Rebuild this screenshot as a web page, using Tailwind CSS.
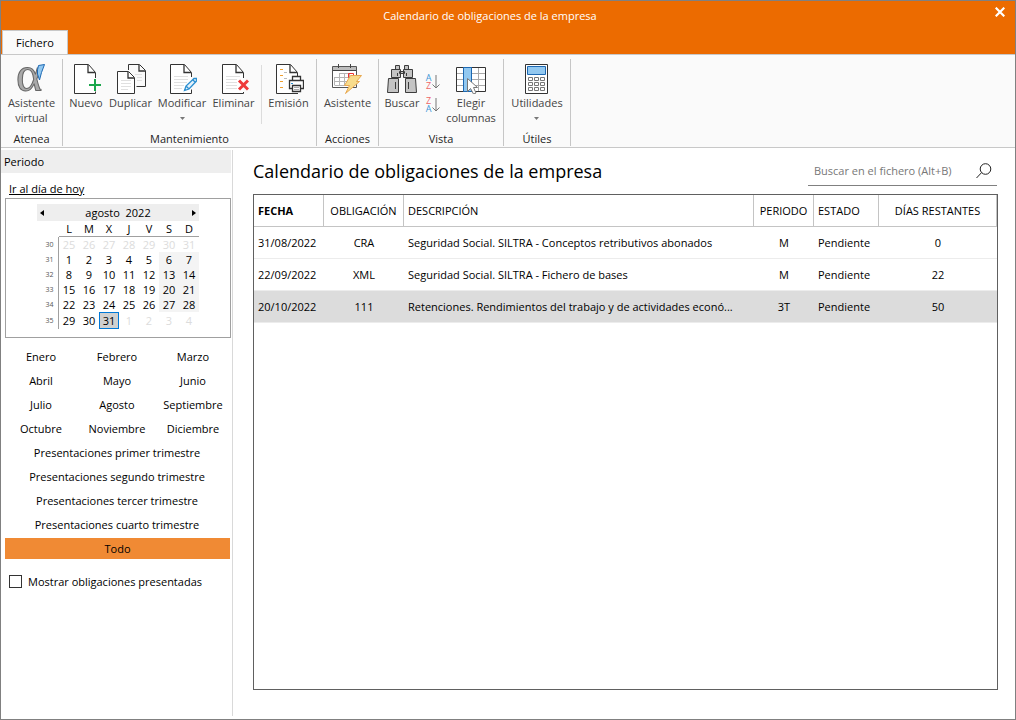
<!DOCTYPE html>
<html lang="es">
<head>
<meta charset="utf-8">
<meta name="viewport" content="width=device-width, initial-scale=1">
<title>Calendario de obligaciones de la empresa</title>
<script src="https://cdn.jsdelivr.net/npm/@tailwindcss/browser@4"></script>
</head>
<body class="flex min-h-screen flex-col border border-[#808080] bg-white font-['Open_Sans','Noto_Sans',sans-serif] text-[11px] leading-[15px] text-black">

<header class="flex flex-col bg-[#ec6b00]">
  <div class="flex h-[29px] items-center text-center text-white">
    <span class="flex-1 pl-4">Calendario de obligaciones de la empresa</span>
    <button aria-label="Cerrar" class="mr-2.5 ml-8 flex h-[22px] items-center justify-center self-start">
      <svg width="10" height="10" viewBox="0 0 10 10" stroke="#fff" stroke-width="2.2"><path d="M.7.7 9.3 9.3M9.3.7.7 9.3"/></svg>
    </button>
  </div>
  <nav class="flex h-6 px-px">
    <button class="w-[66px] border-x border-t border-[#c8c8c8] bg-[#fafafa]">Fichero</button>
  </nav>
</header>

<section aria-label="Cinta de opciones" class="flex h-[94px] border-y border-[#c8c8c8] bg-[#fafafa] pt-1 pb-px text-[#444]">
  <div class="flex w-[62px] flex-col border-r border-[#c6c6c6]">
    <div class="flex flex-1 justify-center pt-[5px]">
      <button class="flex flex-col items-center">
        <svg class="mb-px overflow-visible" width="30" height="30" viewBox="0 0 30 30">
          <text x="0" y="27" font-family="Liberation Serif, serif" font-size="50" fill="#a9a9a9" stroke="#666" stroke-width="1">α</text>
          <path d="M22.500 1.500 28.500 .5 25.500 8.500 23.500 16 21.500 10Q21 6 22.500 1.500Z" fill="#92c8f0" stroke="#1c68b3"/>
        </svg>
        <span>Asistente<br>virtual</span>
      </button>
    </div>
    <h2 class="text-center text-[#222]">Atenea</h2>
  </div>

  <div class="flex w-[254px] flex-col border-r border-[#c6c6c6]">
    <div class="flex flex-1 px-[3px] pt-[5px]">
      <button class="flex w-10 flex-col items-center">
        <svg class="mb-px shrink-0" width="30" height="30" viewBox="0 0 30 30" fill="none">
          <path d="M24.500 29.500H3.500V.5H17.500L24.500 8.500V14M24.500 27.500V29.500" fill="#fff" stroke="#333"/>
          <path d="M17 1V8.500H24" stroke="#333" stroke-width="1.300"/>
          <path d="M24 15V27M18 21H30" stroke="#1aa64b" stroke-width="2"/>
        </svg>
        <span>Nuevo</span>
      </button>
      <button class="flex w-[49px] flex-col items-center">
        <svg class="mb-px shrink-0" width="30" height="30" viewBox="0 0 30 30" fill="none">
          <path d="M12.500 6V.5H23.500L29.500 6.500V22.500H20.500" stroke="#333"/>
          <path d="M23 1V7H29" stroke="#333" stroke-width="1.300"/>
          <path d="M19 10.500H26M21 13.500H26M21 16.500H26" stroke="#e0e0e0"/>
          <path d="M1.500 7.500H12.500L18.500 13.500V29.500H1.500Z" fill="#fff" stroke="#333"/>
          <path d="M12 8V14H18" stroke="#333" stroke-width="1.300"/>
          <path d="M5 16.500H15M5 19.500H15M5 22.500H15M5 25.500H12" stroke="#e0e0e0"/>
        </svg>
        <span>Duplicar</span>
      </button>
      <button class="flex w-[54px] flex-col items-center">
        <svg class="mb-px shrink-0" width="30" height="30" viewBox="0 0 30 30" fill="none">
          <path d="M24.500 29.500H3.500V.5H17.500L24.500 8.500V13M24.500 25.500V29.500" fill="#fff" stroke="#333"/>
          <path d="M17 1V8.500H24" stroke="#333" stroke-width="1.300"/>
          <path d="M7 12.500H21M7 15.500H21M7 18.500H20M7 21.500H17M7 24.500H15" stroke="#e0e0e0"/>
          <path d="M17.500 26.500 19 22 27 14.500 29.500 14.500 29.500 17 22 25ZM19.500 22.500 21.500 24.500M26 16 28 18" fill="#e3f1fb" stroke="#2b8fd0" stroke-width="1.300"/>
        </svg>
        <span>Modificar</span>
        <svg class="mt-1" width="5" height="8" viewBox="0 0 5 8"><path d="M0 3H5L2.500 6Z" fill="#777"/></svg>
      </button>
      <button class="flex w-[49px] flex-col items-center">
        <svg class="mb-px shrink-0" width="30" height="30" viewBox="0 0 30 30" fill="none">
          <path d="M24.500 29.500H3.500V.5H17.500L24.500 8.500V14M24.500 28V29.500" fill="#fff" stroke="#333"/>
          <path d="M17 1V8.500H24" stroke="#333" stroke-width="1.300"/>
          <path d="M7 12.500H21M7 15.500H18M7 18.500H18M7 21.500H18M7 24.500H18" stroke="#e0e0e0"/>
          <path d="M20 16.500 29 25.500M29 16.500 20 25.500" stroke="#ee3a3a" stroke-width="3"/>
        </svg>
        <span>Eliminar</span>
      </button>
      <div class="mx-[3px] mt-px h-[59px] w-px bg-[#dcdcdc]"></div>
      <button class="flex w-[47px] flex-col items-center">
        <svg class="mb-px shrink-0" width="30" height="30" viewBox="0 0 30 30" fill="none">
          <path d="M24 29.500H2.500V.5H16.500L23.500 8.500V12" fill="#fff" stroke="#333"/>
          <path d="M16 1V8.500H23" stroke="#333" stroke-width="1.300"/>
          <path d="M6 5.500H9M6 11.500H9M6 17.500H9M6 23.500H9" stroke="#f0a030"/>
          <path d="M10 8.500H13M10 14.500H13" stroke="#bbb"/>
          <path d="M18.500 16V12.500H26.500V16" fill="#fff" stroke="#333" stroke-width="1.300"/>
          <path d="M15.500 16.500H29.500V24.500H15.500Z" fill="#fff" stroke="#333" stroke-width="1.300"/>
          <path d="M17 19.500H19" stroke="#2b8fd0"/>
          <path d="M18.500 21.500H26.500V27.500H18.500Z" fill="#fff" stroke="#333" stroke-width="1.300"/>
          <path d="M20 23.500H25M20 25.500H25" stroke="#aaa"/>
        </svg>
        <span>Emisión</span>
      </button>
    </div>
    <h2 class="text-center text-[#222]">Mantenimiento</h2>
  </div>

  <div class="flex w-[62px] flex-col border-r border-[#c6c6c6]">
    <div class="flex flex-1 justify-center pt-[5px]">
      <button class="flex flex-col items-center">
        <svg class="mb-px" width="30" height="30" viewBox="0 0 30 30" fill="none">
          <path d="M.5 2.500H24.500V23.500H.5Z" fill="#fff" stroke="#555"/>
          <path d="M1 3H24V6.500H1Z" fill="#bdbdbd"/>
          <path d="M1 6.500H24M6.500 0V4M18.500 0V4" stroke="#444"/>
          <path d="M2.500 13.500H21M2.500 17.500H21M7.500 9.500H21M2.500 21.500H17M2.500 13V21M7.500 9V21M12.500 9V21M17.500 9V21" stroke="#b5b5b5"/>
          <path d="M16.500 9.500H21.500V13.500H16.500Z" stroke="#e33"/>
          <path d="M18.500 11.500H29.500L24.500 17.500H27.500L13.500 29.500 17.500 21.500H12.500Z" fill="#f8dc8c" stroke="#e8a850"/>
        </svg>
        <span>Asistente</span>
      </button>
    </div>
    <h2 class="text-center text-[#222]">Acciones</h2>
  </div>

  <div class="flex w-[125px] flex-col border-r border-[#c6c6c6]">
    <div class="flex flex-1 px-[3px] pt-[5px]">
      <button class="flex w-10 flex-col items-center">
        <svg class="mb-px shrink-0" width="30" height="30" viewBox="0 0 30 30" fill="#c4c4c4" stroke="#3c3c3c">
          <path d="M8.500 1.500H12.500V5.500H8.500ZM17.500 1.500H21.500V5.500H17.500ZM12.500 7.500H17.500V9.500H12.500ZM4.500 5.500H13.500V13.500H4.500ZM16.500 5.500H25.500V13.500H16.500ZM1.500 14.500H11.500V28.500H.5ZM18.500 14.500H28.500L29.500 28.500H18.500Z"/>
          <path d="M10.500 9V12M19.500 9V12M8.500 18V25M21.500 18V25" fill="none"/>
        </svg>
        <span>Buscar</span>
      </button>
      <div class="flex w-[22px] flex-col items-center gap-[7px] pt-2.5">
        <button aria-label="Orden ascendente" class="flex items-center gap-px text-[9px] leading-2">
          <span class="flex flex-col"><span class="text-[#3b97d8]">A</span><span class="text-[#ee6666]">Z</span></span>
          <svg width="8" height="16" viewBox="0 0 8 16" fill="none" stroke="#777"><path d="M4 1V14M.5 10.500 4 14 7.500 10.500"/></svg>
        </button>
        <button aria-label="Orden descendente" class="flex items-center gap-px text-[9px] leading-2">
          <span class="flex flex-col"><span class="text-[#ee6666]">Z</span><span class="text-[#3b97d8]">A</span></span>
          <svg width="8" height="16" viewBox="0 0 8 16" fill="none" stroke="#777"><path d="M4 1V14M.5 10.500 4 14 7.500 10.500"/></svg>
        </button>
      </div>
      <button class="flex w-[54px] flex-col items-center">
        <svg class="mb-px shrink-0" width="30" height="30" viewBox="0 0 30 30" fill="none">
          <path d="M.5 3.500H29.500V27.500H.5Z" fill="#fff"/>
          <path d="M1 9.500H29M1 15.500H29M1 21.500H29M22.500 4V27" stroke="#aaa"/>
          <path d="M.5 3.500H29.500V27.500H.5Z" stroke="#333"/>
          <path d="M7.500 3.500H15.500V27.500H7.500Z" fill="#92c8f0" stroke="#1c68b3"/>
          <path d="M11.500 14.500V27.500L14.500 24.500 17.500 30 20 29 17.500 23.500H21.500Z" fill="#fff" stroke="#777"/>
        </svg>
        <span>Elegir<br>columnas</span>
      </button>
    </div>
    <h2 class="text-center text-[#222]">Vista</h2>
  </div>

  <div class="flex w-[67px] flex-col border-r border-[#c6c6c6]">
    <div class="flex flex-1 justify-center pt-[5px]">
      <button class="flex flex-col items-center">
        <svg class="mb-px" width="30" height="30" viewBox="0 0 30 30" fill="none">
          <path d="M3.500 .5H25.500V29.500H3.500Z" fill="#fff" stroke="#333"/>
          <path d="M5.500 2.500H23.500V10.500H5.500Z" fill="#92c8f0" stroke="#1c68b3"/>
          <path d="M6.500 13.500H10.500V16.500H6.500ZM12.500 13.500H16.500V16.500H12.500ZM18.500 13.500H22.500V16.500H18.500ZM6.500 18.500H10.500V21.500H6.500ZM12.500 18.500H16.500V21.500H12.500ZM18.500 18.500H22.500V21.500H18.500ZM6.500 23.500H10.500V26.500H6.500ZM12.500 23.500H16.500V26.500H12.500ZM18.500 23.500H22.500V26.500H18.500Z" stroke="#777"/>
        </svg>
        <span>Utilidades</span>
        <svg class="mt-1" width="5" height="8" viewBox="0 0 5 8"><path d="M0 3H5L2.500 6Z" fill="#777"/></svg>
      </button>
    </div>
    <h2 class="text-center text-[#222]">Útiles</h2>
  </div>
</section>

<div class="flex flex-1 pt-0.5 pb-[3px]">
  <aside class="w-[232px] shrink-0 border-r border-[#d9d9d9]">
    <h2 class="mr-px h-[23px] bg-[#eee] pt-1 pl-[3px]">Periodo</h2>
    <div class="flex flex-col pr-px pl-1">
      <a href="#hoy" class="mt-2 ml-1 self-start underline">Ir al día de hoy</a>
      <div class="mt-0.5 flex h-[140px] justify-center border border-[#a0a0a0] pt-[5px]">
        <div class="w-[162px]">
          <div class="flex h-[17px] items-center justify-between bg-[#eee] px-[3px]">
            <button aria-label="Mes anterior"><svg width="4" height="6" viewBox="0 0 4 6"><path d="M4 0V6L0 3Z"/></svg></button>
            <span class="whitespace-pre">agosto  2022</span>
            <button aria-label="Mes siguiente"><svg width="4" height="6" viewBox="0 0 4 6"><path d="M0 0V6L4 3Z"/></svg></button>
          </div>
          <table class="w-full table-fixed border-separate border-spacing-0 text-center">
            <thead>
              <tr class="h-4">
                <td class="w-[22px] p-0"></td>
                <th class="border-b border-[#a0a0a0] p-0 font-normal">L</th><th class="border-b border-[#a0a0a0] p-0 font-normal">M</th><th class="border-b border-[#a0a0a0] p-0 font-normal">X</th><th class="border-b border-[#a0a0a0] p-0 font-normal">J</th><th class="border-b border-[#a0a0a0] p-0 font-normal">V</th><th class="border-b border-[#a0a0a0] p-0 font-normal">S</th><th class="border-b border-[#a0a0a0] p-0 font-normal">D</th>
              </tr>
            </thead>
            <tbody>
              <tr class="text-[#dcdcdc]"><th class="border-r border-[#a0a0a0] p-0 pl-1 text-[7px] font-normal text-[#555]">30</th><td class="p-0">25</td><td class="p-0">26</td><td class="p-0">27</td><td class="p-0">28</td><td class="p-0">29</td><td class="p-0">30</td><td class="p-0">31</td></tr>
              <tr><th class="border-r border-[#a0a0a0] p-0 pl-1 text-[7px] font-normal text-[#555]">31</th><td class="p-0">1</td><td class="p-0">2</td><td class="p-0">3</td><td class="p-0">4</td><td class="p-0">5</td><td class="bg-[#f4f4f4] p-0">6</td><td class="bg-[#f4f4f4] p-0">7</td></tr>
              <tr><th class="border-r border-[#a0a0a0] p-0 pl-1 text-[7px] font-normal text-[#555]">32</th><td class="p-0">8</td><td class="p-0">9</td><td class="p-0">10</td><td class="p-0">11</td><td class="p-0">12</td><td class="bg-[#f4f4f4] p-0">13</td><td class="bg-[#f4f4f4] p-0">14</td></tr>
              <tr><th class="border-r border-[#a0a0a0] p-0 pl-1 text-[7px] font-normal text-[#555]">33</th><td class="p-0">15</td><td class="p-0">16</td><td class="p-0">17</td><td class="p-0">18</td><td class="p-0">19</td><td class="bg-[#f4f4f4] p-0">20</td><td class="bg-[#f4f4f4] p-0">21</td></tr>
              <tr><th class="border-r border-[#a0a0a0] p-0 pl-1 text-[7px] font-normal text-[#555]">34</th><td class="p-0">22</td><td class="p-0">23</td><td class="p-0">24</td><td class="p-0">25</td><td class="p-0">26</td><td class="bg-[#f4f4f4] p-0">27</td><td class="bg-[#f4f4f4] p-0">28</td></tr>
              <tr class="text-[#dcdcdc]"><th class="border-r border-[#a0a0a0] p-0 pl-1 text-[7px] font-normal text-[#555]">35</th><td class="p-0 text-black">29</td><td class="p-0 text-black">30</td><td class="border border-[#0078d7] bg-[#d0d0d0] p-0 text-black">31</td><td class="p-0">1</td><td class="p-0">2</td><td class="p-0">3</td><td class="p-0">4</td></tr>
            </tbody>
          </table>
        </div>
      </div>
      <div class="mt-1.5 grid grid-cols-3 gap-x-1 pr-0.5">
        <button class="h-6">Enero</button><button class="h-6">Febrero</button><button class="h-6">Marzo</button>
        <button class="h-6">Abril</button><button class="h-6">Mayo</button><button class="h-6">Junio</button>
        <button class="h-6">Julio</button><button class="h-6">Agosto</button><button class="h-6">Septiembre</button>
        <button class="h-6">Octubre</button><button class="h-6">Noviembre</button><button class="h-6">Diciembre</button>
      </div>
      <div class="flex flex-col pr-0.5">
        <button class="h-6">Presentaciones primer trimestre</button>
        <button class="h-6">Presentaciones segundo trimestre</button>
        <button class="h-6">Presentaciones tercer trimestre</button>
        <button class="h-6">Presentaciones cuarto trimestre</button>
      </div>
      <button class="mt-0.5 mr-px h-[21px] bg-[#f08a34]">Todo</button>
      <label class="mt-[15px] ml-1 flex items-center gap-1.5">
        <input type="checkbox" class="size-[13px] appearance-none border border-[#333] bg-white checked:bg-[#f08a34]">
        Mostrar obligaciones presentadas
      </label>
    </div>
  </aside>

  <main class="flex min-w-0 flex-1 flex-col pt-[5px] pr-[17px] pb-[26px] pl-5">
    <div class="flex h-[31px] items-stretch justify-between pr-px">
      <h1 class="text-[18px] leading-8">Calendario de obligaciones de la empresa</h1>
      <label class="flex w-[189px] items-center border-b border-[#808080] pr-[5px] pl-1.5">
        <input type="search" aria-label="Buscar en el fichero" placeholder="Buscar en el fichero (Alt+B)" class="min-w-0 flex-1 bg-transparent outline-none placeholder:text-[#777]">
        <svg class="mt-0.5" width="16" height="16" viewBox="0 0 16 16" fill="none" stroke="#222"><circle cx="9.500" cy="6" r="5.300"/><path d="M5.500 9.700 .5 15"/></svg>
      </label>
    </div>
    <div class="mt-2 flex-1 border border-[#606060]">
      <table class="w-full table-fixed border-separate border-spacing-0 text-left leading-4 whitespace-nowrap">
        <thead>
          <tr class="h-8">
            <th class="w-[70px] border-r border-b border-[#c4c4c4] p-0 pl-1 font-bold">FECHA</th>
            <th class="w-20 border-r border-b border-[#c4c4c4] p-0 text-center font-normal">OBLIGACIÓN</th>
            <th class="border-r border-b border-[#c4c4c4] p-0 pl-1 font-normal">DESCRIPCIÓN</th>
            <th class="w-[60px] border-r border-b border-[#c4c4c4] p-0 text-center font-normal">PERIODO</th>
            <th class="w-[65px] border-r border-b border-[#c4c4c4] p-0 pl-1 font-normal">ESTADO</th>
            <th class="w-[118px] border-r border-b border-[#c4c4c4] p-0 text-center font-normal">DÍAS RESTANTES</th>
          </tr>
        </thead>
        <tbody>
          <tr class="h-8"><td class="border-b border-[#ececec] p-0 pl-1">31/08/2022</td><td class="border-b border-[#ececec] p-0 text-center">CRA</td><td class="truncate border-b border-[#ececec] p-0 pr-2 pl-1">Seguridad Social. SILTRA - Conceptos retributivos abonados</td><td class="border-b border-[#ececec] p-0 text-center">M</td><td class="border-b border-[#ececec] p-0 pl-1">Pendiente</td><td class="border-b border-[#ececec] p-0 text-center">0</td></tr>
          <tr class="h-8"><td class="border-b border-[#ececec] p-0 pl-1">22/09/2022</td><td class="border-b border-[#ececec] p-0 text-center">XML</td><td class="truncate border-b border-[#ececec] p-0 pr-2 pl-1">Seguridad Social. SILTRA - Fichero de bases</td><td class="border-b border-[#ececec] p-0 text-center">M</td><td class="border-b border-[#ececec] p-0 pl-1">Pendiente</td><td class="border-b border-[#ececec] p-0 text-center">22</td></tr>
          <tr class="h-8 bg-[#dcdcdc]"><td class="border-b border-[#ececec] p-0 pl-1">20/10/2022</td><td class="border-b border-[#ececec] p-0 text-center">111</td><td class="truncate border-b border-[#ececec] p-0 pr-2 pl-1">Retenciones. Rendimientos del trabajo y de actividades econó...</td><td class="border-b border-[#ececec] p-0 text-center">3T</td><td class="border-b border-[#ececec] p-0 pl-1">Pendiente</td><td class="border-b border-[#ececec] p-0 text-center">50</td></tr>
        </tbody>
      </table>
    </div>
  </main>
</div>
</body>
</html>
